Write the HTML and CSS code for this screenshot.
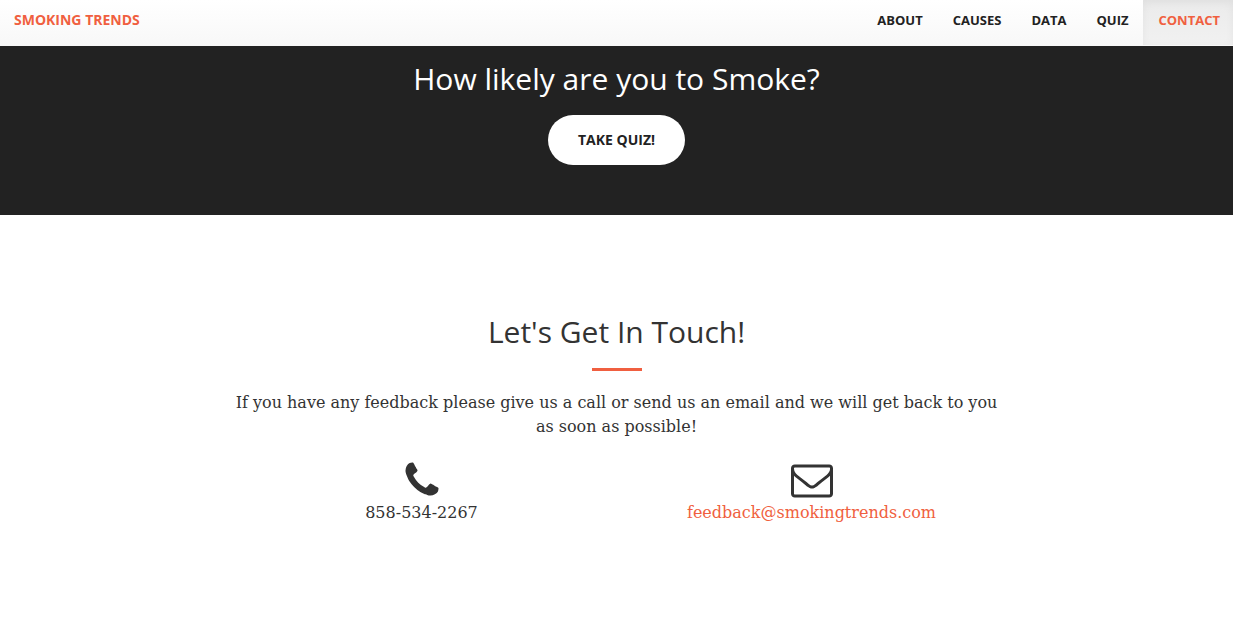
FILE: index.html
```html
<!DOCTYPE html>
<html lang="en">
<head>
<meta charset="utf-8">
<meta name="viewport" content="width=device-width, initial-scale=1">
<title>Smoking Trends</title>
<link rel="stylesheet" href="styles.css">
</head>
<body>
<nav class="navbar">
  <a class="brand" href="#top">Smoking Trends</a>
  <ul class="nav-links">
    <li><a href="#about">About</a></li>
    <li><a href="#causes">Causes</a></li>
    <li><a href="#data">Data</a></li>
    <li><a href="#quiz">Quiz</a></li>
    <li><a class="active" href="#contact">Contact</a></li>
  </ul>
</nav>
<main>
  <section class="quiz" id="quiz">
    <h2 class="title">How likely are you to Smoke?</h2>
    <button class="quiz-button" type="button">Take Quiz!</button>
  </section>
  <section class="contact" id="contact">
    <h2 class="title">Let's Get In Touch!</h2>
    <hr class="rule">
    <p class="lead">If you have any feedback please give us a call or send us an email and we will get back to you as soon as possible!</p>
    <div class="methods">
      <div class="method">
        <svg class="icon" viewBox="-192 -150 1792 1792" aria-hidden="true"><path d="M1408 1112q0 27-10 70.500t-21 68.500q-21 50-122 106-94 51-186 51-27 0-53-3.500t-57.500-12.500-47-14.500-55.500-20.500-49-18q-98-35-175-83-127-79-264-216t-216-264q-48-77-83-175-3-9-18-49t-20.500-55.500-14.500-47-12.500-57.500-3.500-53q0-92 51-186 56-101 106-122 25-11 68.500-21t70.500-10q14 0 21 3 18 6 53 76 11 19 30 54t35 63.500 31 53.500q3 4 17.500 25t21.500 35.500 7 28.500q0 20-28.500 50t-62 55-62 53-28.500 46q0 9 5 22.500t8.500 20.500 14 24 11.500 19q76 137 174 235t235 174q2 1 19 11.500t24 14 20.500 8.500 22.500 5q18 0 46-28.500t53-62 55-62 50-28.500q14 0 28.500 7t35.500 21.500 25 17.500q25 15 53.500 31t63.500 35 54 30q70 35 76 53 3 7 3 21z"/></svg>
        <p class="detail">858-534-2267</p>
      </div>
      <div class="method">
        <svg class="icon" viewBox="0 21 1792 1792" aria-hidden="true"><path d="M1664 1504v-768q-32 36-69 66-268 206-426 338-51 43-83 67t-86.500 48.500-102.500 24.500h-2q-48 0-102.500-24.500t-86.500-48.500-83-67q-158-132-426-338-37-30-69-66v768q0 13 9.500 22.500t22.500 9.500h1472q13 0 22.500-9.500t9.500-22.500zm0-1051v-24.500l-.5-13-3-12.500-5.500-9-9-7.500-14-2.500h-1472q-13 0-22.500 9.500t-9.500 22.500q0 168 147 284 193 152 401 317 6 5 35 29.500t46 37.500 44.500 31.500 50.500 27.500 43 9h2q20 0 43-9t50.500-27.500 44.500-31.500 46-37.500 35-29.500q208-165 401-317 54-43 100.500-115.500t46.500-131.500zm128-37v1088q0 66-47 113t-113 47h-1472q-66 0-113-47t-47-113v-1088q0-66 47-113t113-47h1472q66 0 113 47t47 113z"/></svg>
        <p class="detail"><a href="mailto:feedback@smokingtrends.com">feedback@smokingtrends.com</a></p>
      </div>
    </div>
  </section>
</main>
</body>
</html>
```
FILE: styles.css
```css
* {
  box-sizing: border-box;
}

body {
  margin: 0;
  background: #fff;
  color: #333;
  font-family: "DejaVu Serif", serif;
  font-size: 16px;
  line-height: 24px;
}

a {
  color: #f05f40;
  text-decoration: none;
}

.navbar {
  display: flex;
  justify-content: space-between;
  background: linear-gradient(#fff, #f8f8f8);
  font-family: "Open Sans", sans-serif;
  font-size: 13px;
  font-weight: 700;
  line-height: 20px;
  text-transform: uppercase;
}

.brand {
  padding: 10px 14px 16px;
  font-size: 14px;
}

.nav-links {
  display: flex;
  margin: 0;
  padding: 0;
  list-style: none;
}

.nav-links a {
  display: block;
  padding: 10px 15px 15px;
  color: #222;
}

.nav-links .active {
  padding-right: 13px;
  background: linear-gradient(#ebebeb, #f1f1f1);
  box-shadow: inset 0 3px 9px rgba(0, 0, 0, 0.05);
  color: #f05f40;
}

.title {
  margin: 0;
  font-family: "Open Sans", sans-serif;
  font-size: 30px;
  font-weight: 400;
  line-height: 34px;
}

.quiz {
  display: flex;
  flex-direction: column;
  align-items: center;
  gap: 19px;
  padding: 16px 16px 50px;
  background: #222;
  color: #fff;
  text-align: center;
}

.quiz-button {
  padding: 15px 30px;
  border: 0;
  border-radius: 300px;
  background: #fff;
  color: #222;
  font-family: "Open Sans", sans-serif;
  font-size: 14px;
  font-weight: 700;
  line-height: 20px;
  text-transform: uppercase;
}

.contact {
  max-width: 780px;
  margin: 0 auto;
  padding: 100px 0;
  text-align: center;
}

.rule {
  width: 50px;
  height: 3px;
  margin: 19px auto 20px;
  border: 0;
  background: #f05f40;
}

.lead {
  margin: 0 0 20px;
}

.methods {
  display: grid;
  grid-template-columns: 1fr 1fr;
}

.icon {
  display: block;
  width: 42px;
  height: 42px;
  margin: 0 auto;
  fill: #333;
}

.detail {
  margin: 0;
}
```
